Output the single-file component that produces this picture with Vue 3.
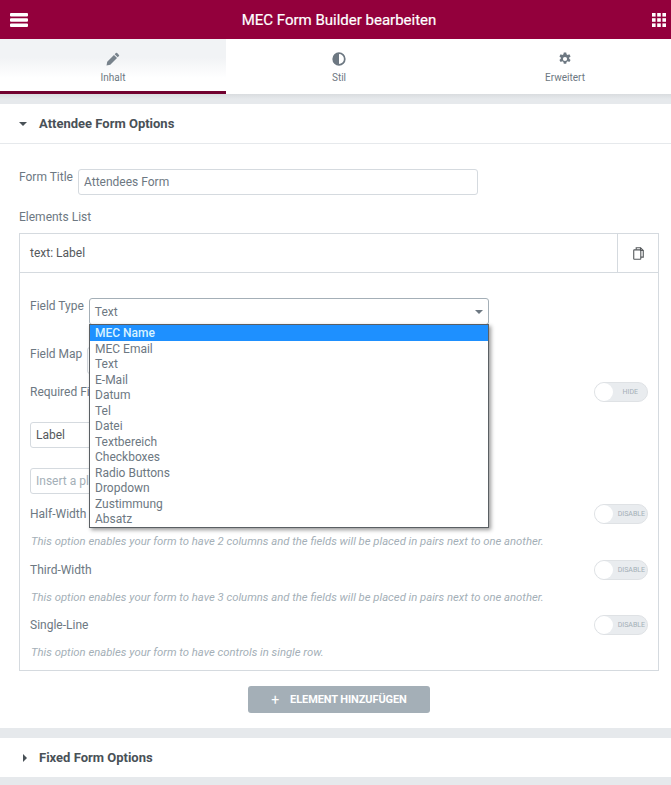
<template>
  <div class="panel">
    <header class="topbar">
      <svg class="top-icon" width="18" height="14" viewBox="0 0 18 14"><path d="M1 0h16a1 1 0 0 1 1 1v1.500a1 1 0 0 1-1 1H1a1 1 0 0 1-1-1V1a1 1 0 0 1 1-1zm0 5.300h16a1 1 0 0 1 1 1v1.400a1 1 0 0 1-1 1H1a1 1 0 0 1-1-1V6.300a1 1 0 0 1 1-1zm0 5.200h16a1 1 0 0 1 1 1V13a1 1 0 0 1-1 1H1a1 1 0 0 1-1-1v-1.500a1 1 0 0 1 1-1z" fill="#fff"/></svg>
      <h1>MEC Form Builder bearbeiten</h1>
      <svg class="top-icon" width="14" height="14" viewBox="0 0 14 14" fill="#fff"><rect v-for="c in gridCells" :key="c.id" :x="c.x" :y="c.y" width="3.600" height="3.600"/></svg>
    </header>

    <nav class="tabs">
      <div class="tab active">
        <svg width="14" height="14" viewBox="0 0 16 16"><path d="M11.300 1.200a1 1 0 0 1 1.400 0l2.100 2.100a1 1 0 0 1 0 1.400l-1.400 1.400-3.500-3.500zM9.100 3.400l3.500 3.500-7.700 7.700L.6 15.400l.8-4.300z" fill="#78838c"/></svg>
        <span>Inhalt</span>
      </div>
      <div class="tab">
        <svg width="14" height="14" viewBox="0 0 16 16"><path d="M8 .4a7.600 7.600 0 1 0 0 15.200A7.600 7.600 0 0 0 8 .4zm0 2v11.200A5.600 5.600 0 0 0 8 2.400z" fill="#6d7882" fill-rule="evenodd"/></svg>
        <span>Stil</span>
      </div>
      <div class="tab">
        <svg width="14" height="14" viewBox="0 0 16 16"><path d="M6.600.6h2.800l.4 2 1.200.7 2-.7 1.400 2.400-1.600 1.400v1.200l1.600 1.400-1.400 2.400-2-.7-1.200.7-.4 2H6.600l-.4-2-1.200-.7-2 .7-1.400-2.400 1.600-1.400V6.400L1.600 5l1.400-2.400 2 .7 1.200-.7zM8 5.600a2.400 2.400 0 1 0 0 4.800 2.400 2.400 0 0 0 0-4.800z" fill="#6d7882" fill-rule="evenodd"/></svg>
        <span>Erweitert</span>
      </div>
    </nav>

    <div class="band first"></div>

    <section class="section">
      <div class="section-head open">
        <i class="caret-down"></i>
        <b>Attendee Form Options</b>
      </div>
      <div class="section-body">
        <div class="title-row">
          <label>Form Title</label>
          <div class="input title-input">Attendees Form</div>
        </div>
        <div class="list-label">Elements List</div>

        <div class="list-box">
          <div class="list-head">
            <span>text: Label</span>
            <div class="copy">
              <svg width="11" height="13" viewBox="0 0 12 14" fill="none" stroke="#55595c" stroke-width="1.200"><path d="M3.500 3V.8h4.700L11.200 3.800V11H8.500"/><rect x=".8" y="3" width="7.700" height="10.200" rx=".6"/><path d="M8.200.8v3h3"/></svg>
            </div>
          </div>

          <div class="list-body">
            <div class="field-row type-row">
              <label>Field Type</label>
              <div class="select">
                <span>Text</span>
                <i class="caret-down small"></i>
              </div>
              <ul class="dropdown">
                <li v-for="(opt, i) in fieldTypes" :key="opt" :class="{ selected: i === 0 }">{{ opt }}</li>
              </ul>
            </div>

            <div class="field-row map-row">
              <label>Field Map</label>
              <div class="select"></div>
            </div>

            <div class="switch-row required-row">
              <label>Required Field</label>
              <div class="switch"><em></em><span>HIDE</span></div>
            </div>

            <div class="input wide label-input">Label</div>
            <div class="input wide placeholder">Insert a placeholder</div>

            <template v-for="opt in widthOptions" :key="opt.label">
              <div class="switch-row">
                <label>{{ opt.label }}</label>
                <div class="switch"><em></em><span class="disable">DISABLE</span></div>
              </div>
              <p class="help">{{ opt.help }}</p>
            </template>
          </div>
        </div>

        <div class="btn-wrap">
          <button class="add-btn"><span class="plus">+</span>ELEMENT HINZUFÜGEN</button>
        </div>
      </div>
    </section>

    <div class="band"></div>

    <section class="section closed">
      <div class="section-head">
        <i class="caret-right"></i>
        <b>Fixed Form Options</b>
      </div>
    </section>

    <div class="band last"></div>
  </div>
</template>

<script setup>
const gridCells = [];
for (let r = 0; r < 3; r++) {
  for (let c = 0; c < 3; c++) {
    gridCells.push({ id: r + "-" + c, x: c * 5.2, y: r * 5.2 });
  }
}

const fieldTypes = [
  "MEC Name",
  "MEC Email",
  "Text",
  "E-Mail",
  "Datum",
  "Tel",
  "Datei",
  "Textbereich",
  "Checkboxes",
  "Radio Buttons",
  "Dropdown",
  "Zustimmung",
  "Absatz",
];

const widthOptions = [
  { label: "Half-Width", help: "This option enables your form to have 2 columns and the fields will be placed in pairs next to one another." },
  { label: "Third-Width", help: "This option enables your form to have 3 columns and the fields will be placed in pairs next to one another." },
  { label: "Single-Line", help: "This option enables your form to have controls in single row." },
];
</script>

<style>
html,
body {
  margin: 0;
  overflow: hidden;
  background: #e6e9ec;
}
</style>

<style scoped>
.panel {
  width: 671px;
  height: 785px;
  overflow: hidden;
  font-family: Roboto, "Liberation Sans", sans-serif;
  font-size: 12px;
  color: #6d7882;
  background: #e6e9ec;
}

.topbar {
  height: 39px;
  background: #93003c;
  display: flex;
  align-items: center;
  justify-content: space-between;
  padding: 0 5px 0 10px;
  color: #fff;
}

.topbar h1 {
  margin: 0 2px 0 0;
  font-size: 15px;
  font-weight: 400;
  color: #fff;
  -webkit-text-stroke: 0.2px #fff;
}

.top-icon {
  display: block;
}

.tabs {
  height: 55px;
  display: flex;
  background: #fff;
  overflow: hidden;
}

.tab {
  flex: none;
  width: 226px;
  display: flex;
  flex-direction: column;
  align-items: center;
  padding-top: 13px;
  box-sizing: border-box;
  gap: 6px;
  font-size: 10px;
}

.tab.active {
  background: linear-gradient(#f1f3f5 35%, #fff 75%);
  border-bottom: 3px solid #71012f;
}

.band {
  height: 10px;
  background: #e6e9ec;
}

.band.first {
  background: linear-gradient(#d9dcdf, #e6e9ec 50%);
}

.band.last {
  height: 8px;
}

.section {
  background: #fff;
}

.section-head {
  height: 39px;
  display: flex;
  align-items: center;
  padding-left: 19px;
  font-size: 13px;
  color: #495157;
}

.section-head.open {
  height: 40px;
  border-bottom: 1px solid #e6e9ec;
  box-sizing: border-box;
}

.section-head b {
  font-weight: 700;
}

.caret-down {
  width: 0;
  height: 0;
  border: 4px solid transparent;
  border-top: 4px solid #495157;
  border-bottom: 0;
  margin-right: 12px;
}

.caret-down.small {
  margin: 0;
  border-top-color: #6d7882;
}

.caret-right {
  width: 0;
  height: 0;
  border: 4px solid transparent;
  border-left: 4px solid #495157;
  border-right: 0;
  margin: 0 12px 0 4px;
}

.section-body {
  padding: 25px 12px 15px 19px;
}

.title-row {
  display: flex;
  align-items: flex-start;
  gap: 5px;
}

.title-row label {
  line-height: 15px;
  padding-top: 1px;
}

.input {
  box-sizing: border-box;
  height: 26px;
  line-height: 24px;
  border: 1px solid #d5dadf;
  border-radius: 3px;
  padding: 0 5px;
  background: #fff;
  color: #6d7882;
}

.title-input {
  width: 400px;
}

.list-label {
  margin-top: 15px;
  height: 15px;
  line-height: 15px;
}

.list-box {
  margin-top: 8px;
  border: 1px solid #d5dadf;
  height: 438px;
  box-sizing: border-box;
}

.list-head {
  height: 39px;
  box-sizing: border-box;
  display: flex;
  align-items: center;
  justify-content: space-between;
  padding-left: 10px;
  border-bottom: 1px solid #d5dadf;
  color: #55595c;
}

.copy {
  width: 41px;
  height: 38px;
  box-sizing: border-box;
  border-left: 1px solid #d5dadf;
  display: flex;
  align-items: center;
  justify-content: center;
}

.list-body {
  padding: 25px 10px 0;
}

.field-row {
  position: relative;
  display: flex;
  gap: 5px;
  align-items: flex-start;
}

.field-row label {
  line-height: 15px;
  padding-top: 1px;
}

.select {
  box-sizing: border-box;
  width: 400px;
  height: 27px;
  border: 1px solid #a4afb7;
  border-radius: 3px;
  background: #fff;
  display: flex;
  align-items: center;
  justify-content: space-between;
  padding: 0 5px;
}

.type-row {
  z-index: 2;
}

.map-row {
  margin-top: 22px;
}

.map-row label {
  padding-top: 0;
}

.map-row .select {
  border-color: #d5dadf;
}

.dropdown {
  position: absolute;
  left: 59px;
  top: 26px;
  width: 400px;
  box-sizing: border-box;
  margin: 0;
  padding: 0;
  list-style: none;
  background: #fff;
  border: 1px solid #5a5f63;
  box-shadow: 2px 2px 4px rgba(0, 0, 0, 0.4);
  color: #6d7882;
}

.dropdown li {
  height: 15.500px;
  line-height: 16.200px;
  padding-left: 5px;
}

.dropdown li.selected {
  background: #1e90ff;
  color: #d8f3ff;
  font-weight: 500;
}

.switch-row {
  display: flex;
  align-items: center;
  justify-content: space-between;
  height: 20px;
}

.required-row {
  margin-top: 8px;
}

.switch {
  position: relative;
  box-sizing: border-box;
  width: 54px;
  height: 20px;
  margin-left: auto;
  border-radius: 10px;
  border: 1px solid #dfe2e5;
  background: #e9ecef;
  font-size: 7px;
  color: #a4afb7;
  text-align: right;
  line-height: 18px;
  padding-right: 9px;
}

.switch .disable {
  position: relative;
  right: -7px;
}

.switch em {
  position: absolute;
  left: 0;
  top: 0;
  width: 18px;
  height: 18px;
  border-radius: 50%;
  background: #fff;
}

.wide {
  width: 400px;
}

.label-input {
  margin-top: 20px;
  color: #55595c;
}

.placeholder {
  margin-top: 20px;
  color: #a4afb7;
}

.placeholder + .switch-row {
  margin-top: 10px;
}

.help {
  margin: 11px 0 10.500px;
  padding-left: 1px;
  font-size: 11.300px;
  line-height: 14px;
  font-style: italic;
  color: #a4afb7;
}

.btn-wrap {
  margin-top: 15px;
  display: flex;
  justify-content: center;
}

.add-btn {
  width: 182px;
  height: 27px;
  border: 0;
  border-radius: 3px;
  background: #a4afb7;
  color: #fff;
  font-family: inherit;
  font-size: 11px;
  font-weight: 700;
  letter-spacing: -0.1px;
  display: flex;
  align-items: center;
  justify-content: center;
}

.plus {
  font-size: 14px;
  font-weight: 400;
  margin-right: 11px;
}
</style>
